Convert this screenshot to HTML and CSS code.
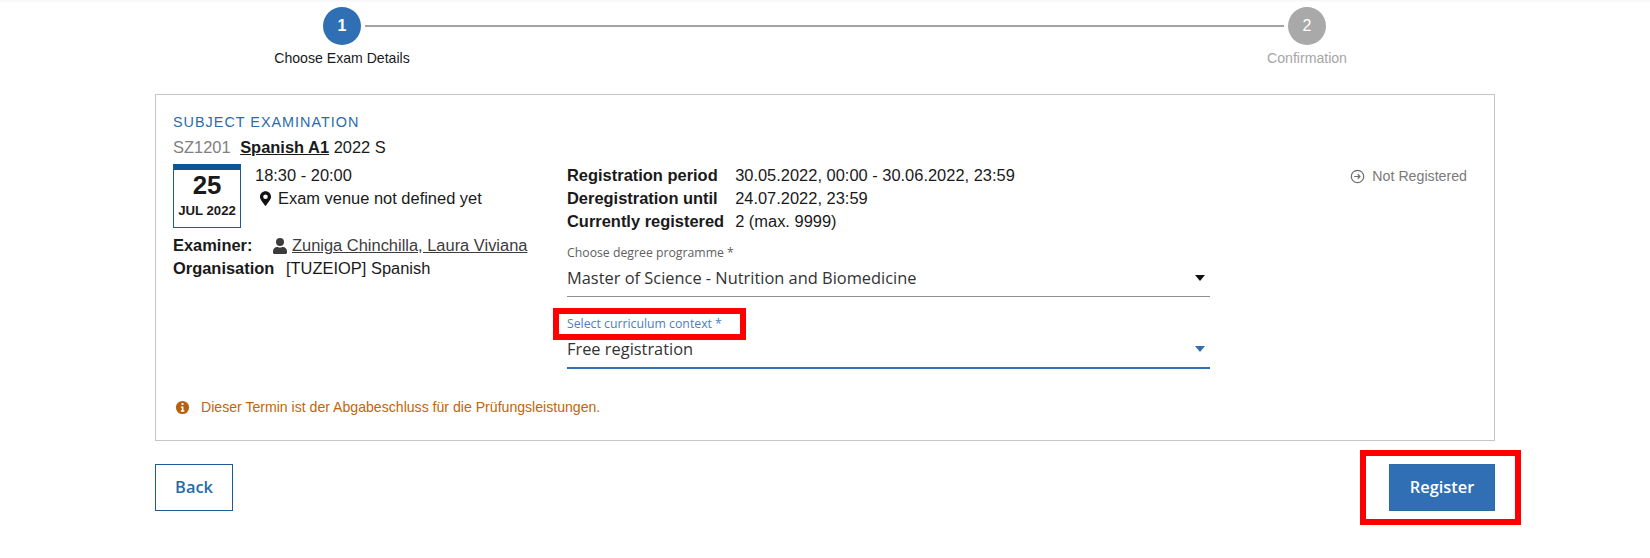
FILE: index.html
```html
<!DOCTYPE html>
<html lang="en">
<head>
  <meta charset="UTF-8" />
  <title>Exam Registration</title>
  <link rel="stylesheet" href="styles.css">
</head>
<body>
  <div class="page">
    <div class="stepper">
      <div class="step-track">
        <div class="step-circle active">1</div>
        <div class="step-line"></div>
        <div class="step-circle">2</div>
      </div>
      <div class="step-labels">
        <div class="step-label active">Choose Exam Details</div>
        <div class="step-label">Confirmation</div>
      </div>
    </div>

    <div class="card">
      <div class="card-type">SUBJECT EXAMINATION</div>
      <div class="card-title">
        <span class="code">SZ1201</span>
        <a class="title-link" href="#">Spanish A1</a> 2022 S
      </div>

      <div class="card-body">
        <div class="col-left">
          <div class="date-row">
            <div class="calendar">
              <div class="cal-day">25</div>
              <div class="cal-month">JUL 2022</div>
            </div>
            <div class="date-info">
              <div>18:30 - 20:00</div>
              <div class="venue">
                <svg class="icon-pin" viewBox="0 0 384 512"><path d="M172 502C27 291 0 263 0 192 0 86 86 0 192 0s192 86 192 192c0 71-27 99-172 310-9.500 14-30.500 14-40 0zm20-230a80 80 0 1 0 0-160 80 80 0 0 0 0 160z"/></svg>
                Exam venue not defined yet
              </div>
            </div>
          </div>
          <div class="person-row">
            <b class="person-label">Examiner:</b>
            <svg class="icon-user" viewBox="0 0 448 512"><path d="M224 256a128 128 0 1 0 0-256 128 128 0 0 0 0 256zm90 32h-17a174 174 0 0 1-146 0h-17C60 288 0 348 0 422v42c0 26 22 48 48 48h352c26 0 48-22 48-48v-42c0-74-60-134-134-134z"/></svg>
            <a class="person-link" href="#">Zuniga Chinchilla, Laura Viviana</a>
          </div>
          <div class="org-row">
            <b class="org-label">Organisation</b>
            <span>[TUZEIOP] Spanish</span>
          </div>
        </div>

        <div class="col-mid">
          <div class="info-grid">
            <b>Registration period</b><span>30.05.2022, 00:00 - 30.06.2022, 23:59</span>
            <b>Deregistration until</b><span>24.07.2022, 23:59</span>
            <b>Currently registered</b><span>2 (max. 9999)</span>
          </div>

          <div class="field">
            <div class="field-label">Choose degree programme *</div>
            <div class="field-value">Master of Science - Nutrition and Biomedicine<span class="caret"></span></div>
          </div>
          <div class="field focused">
            <div class="field-label">Select curriculum context *</div>
            <div class="field-value">Free registration<span class="caret"></span></div>
            <div class="mark mark-label"></div>
          </div>
        </div>

        <div class="col-right">
          <svg class="icon-status" viewBox="0 0 16 16"><circle cx="8" cy="8" r="6.600"/><path d="M4.500 8h6M8.200 5.600 10.600 8l-2.400 2.400"/></svg>
          Not Registered
        </div>
      </div>

      <div class="notice">
        <svg class="icon-info" viewBox="0 0 16 16"><circle cx="8" cy="8" r="7"/><rect x="7" y="3.300" width="2" height="2" fill="#fff"/><path d="M6.300 6.800H9v4.200h1v1.400H6.300V11h1V8.200h-1z" fill="#fff"/></svg>
        Dieser Termin ist der Abgabeschluss für die Prüfungsleistungen.
      </div>
    </div>

    <div class="actions">
      <button class="btn btn-back">Back</button>
      <div class="btn-wrap">
        <button class="btn btn-register">Register</button>
        <div class="mark mark-button"></div>
      </div>
    </div>
  </div>
</body>
</html>
```

FILE: styles.css
```css
* {
  box-sizing: border-box;
}
body {
  margin: 0;
  background-color: white;
  font-family: 'Liberation Sans', Arial, sans-serif;
  font-size: 16.45px;
  color: #1a1a1a;
}
a {
  color: inherit;
}
.page {
  padding: 7px 155px 0;
  box-shadow: inset 0 3px 3px -2px rgba(0,0,0,0.05);
  min-height: 558px;
}

/* stepper */
.step-track {
  display: flex;
  align-items: center;
  gap: 4px;
  margin: 0 169px 0 168px;
}
.step-circle {
  width: 38px;
  height: 38px;
  border-radius: 50%;
  background-color: #a9a9a9;
  color: white;
  display: flex;
  justify-content: center;
  align-items: center;
  font-size: 16px;
}
.step-circle.active {
  background-color: #306fb4;
  font-weight: bold;
}
.step-line {
  flex: 1;
  height: 2px;
  background-color: #a3a3a3;
}
.step-labels {
  display: flex;
  justify-content: space-between;
  margin: 4px 108px 0 107px;
}
.step-label {
  width: 160px;
  text-align: center;
  font-size: 14.1px;
  line-height: 18px;
  color: #a5a5a5;
}
.step-label.active {
  color: #1a1a1a;
}

/* card */
.card {
  height: 347px;
  margin-top: 27px;
  padding: 19px 19px 0 17px;
  border: 1px solid #c3c7cb;
}
.card-type {
  font-size: 14.4px;
  line-height: 16px;
  letter-spacing: 1px;
  color: #2a6ca8;
}
.card-title {
  margin-top: 7px;
  line-height: 20px;
}
.code {
  color: #808080;
  margin-right: 5px;
}
.title-link {
  font-weight: bold;
}
.card-body {
  display: flex;
  margin-top: 7px;
}
.col-left {
  width: 394px;
}
.date-row {
  display: flex;
  gap: 14px;
}
.calendar {
  width: 68px;
  height: 64px;
  border: 1px solid #1c5d99;
  border-top: 6px solid #0f5596;
  text-align: center;
}
.cal-day {
  font-size: 25.8px;
  font-weight: bold;
  line-height: 27px;
  margin-top: 2px;
}
.cal-month {
  font-size: 13.2px;
  font-weight: bold;
  line-height: 16px;
  margin-top: 4px;
}
.date-info {
  line-height: 23px;
}
.venue {
  display: flex;
  align-items: center;
  gap: 7px;
  margin-left: 5px;
}
.icon-pin {
  width: 11px;
  height: 15px;
  fill: #111;
}
.person-row {
  display: flex;
  align-items: center;
  margin-top: 6px;
  line-height: 23px;
}
.person-label {
  width: 100px;
}
.icon-user {
  width: 14px;
  height: 16px;
  fill: #3c3c3c;
  margin-right: 5px;
}
.person-link {
  color: #3c3c3c;
}
.org-row {
  display: flex;
  line-height: 23px;
}
.org-label {
  width: 113px;
}
.col-mid {
  width: 643px;
}
.info-grid {
  display: grid;
  grid-template-columns: max-content 1fr;
  column-gap: 11px;
  line-height: 23px;
}
.field {
  position: relative;
  height: 52px;
  margin-top: 12px;
  border-bottom: 1px solid #8f8f8f;
  font-family: 'Open Sans', sans-serif;
}
.field.focused {
  height: 53px;
  border-bottom: 2px solid #306fb4;
  margin-top: 19px;
}
.field-label {
  font-size: 12.27px;
  line-height: 16px;
  color: #5f5f5f;
}
.focused .field-label {
  color: #4a80bd;
}
.field-value {
  display: flex;
  justify-content: space-between;
  align-items: center;
  margin-top: 5px;
  font-size: 16.4px;
  line-height: 24px;
  color: #333;
  padding-right: 5px;
}
.caret {
  width: 0;
  height: 0;
  border-left: 5.500px solid transparent;
  border-right: 5.500px solid transparent;
  border-top: 6px solid #111;
}
.focused .caret {
  border-top-color: #306fb4;
}
.col-right {
  flex: 1;
  display: flex;
  justify-content: flex-end;
  align-items: flex-start;
  gap: 7px;
  padding-right: 8px;
  padding-top: 1px;
  font-size: 14.2px;
  line-height: 23px;
  color: #7a7a7a;
}
.icon-status {
  width: 15px;
  height: 15px;
  margin-top: 4px;
  fill: none;
  stroke: #6f6f6f;
  stroke-width: 1.300;
}
.notice {
  display: flex;
  align-items: center;
  gap: 11px;
  margin-top: 30px;
  margin-left: 1px;
  font-size: 14.1px;
  line-height: 16px;
  color: #c0660c;
}
.icon-info {
  width: 15px;
  height: 15px;
  fill: #b5610f;
  margin-left: 1px;
}

/* buttons */
.actions {
  display: flex;
  justify-content: space-between;
  margin-top: 23px;
}
.btn-wrap {
  position: relative;
}
.btn {
  display: block;
  height: 47px;
  padding-bottom: 3px;
  font-family: 'Open Sans', sans-serif;
  font-size: 16.4px;
  font-weight: 600;
}
.btn-back {
  width: 78px;
  background-color: white;
  border: 1px solid #1c5d99;
  color: #2a6ca8;
}
.btn-register {
  width: 106px;
  background-color: #306fb4;
  border: 1px solid #2a6ca8;
  color: white;
}

/* red annotations drawn over the screenshot */
.mark {
  position: absolute;
  border: 6px solid #ff0000;
}
.mark-label {
  left: -14px;
  top: -8px;
  width: 193px;
  height: 32px;
}
.mark-button {
  left: -29px;
  top: -14px;
  width: 161px;
  height: 75px;
}
```
